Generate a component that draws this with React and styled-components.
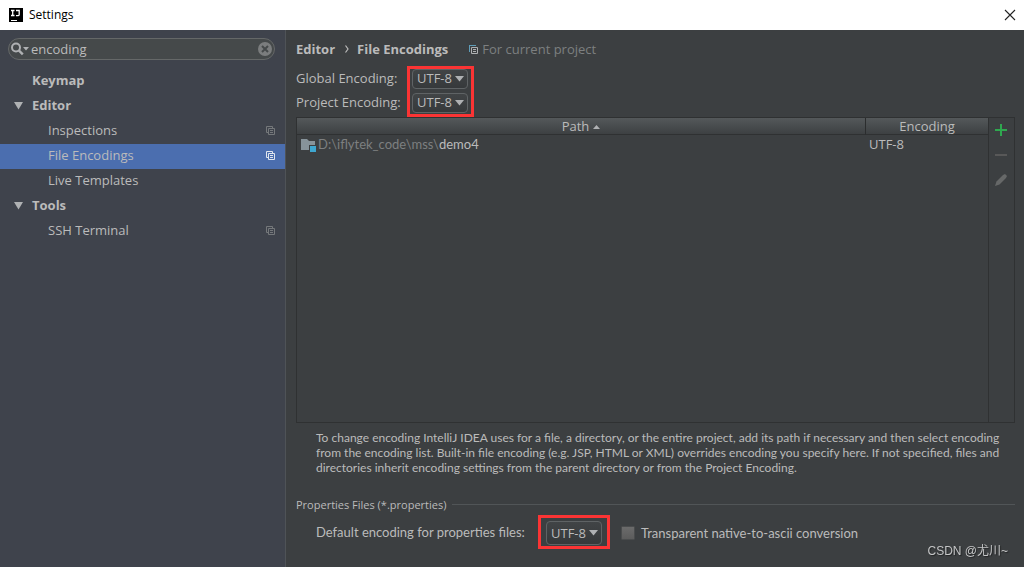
import React from 'react'
import styled, { createGlobalStyle, css } from 'styled-components'

const GlobalStyle = createGlobalStyle`
  * {
    box-sizing: border-box;
  }
  body {
    margin: 0;
    background: #3c3f41;
    color: #bbbbbb;
    font-family: 'Open Sans', 'Noto Sans', 'Noto Sans CJK SC', sans-serif;
    font-size: 13px;
  }
  button, input, select {
    font: inherit;
    color: inherit;
  }
`

const narrowFont = "Lato, 'Open Sans', sans-serif"

const Window = styled.div`
  display: flex;
  flex-direction: column;
  min-height: 100vh;
`

const TitleBar = styled.header`
  display: flex;
  align-items: center;
  height: 30px;
  padding: 0 8px;
  gap: 6px;
  background: #ffffff;
  color: #000000;
`

const Title = styled.h1`
  flex: 1;
  margin: 0;
  padding-bottom: 2px;
  font-size: 12px;
  font-weight: normal;
`

const IconButton = styled.button`
  display: flex;
  align-items: center;
  justify-content: center;
  padding: 0;
  border: none;
  background: none;
`

const Body = styled.div`
  display: flex;
  flex: 1;
`

const Sidebar = styled.aside`
  flex: none;
  width: 286px;
  padding-top: 8px;
  background: #3f434c;
  border-right: 1px solid #4f5357;
`

const SearchBox = styled.div`
  display: flex;
  align-items: center;
  height: 22px;
  margin: 0 10px 9px 8px;
  padding: 0 2px;
  border: 1px solid #656868;
  border-radius: 11px;
  background: #45494a;
`

const SearchInput = styled.input`
  flex: 1;
  min-width: 0;
  padding: 0 2px;
  border: none;
  outline: none;
  background: none;
`

const Tree = styled.ul`
  margin: 0;
  padding: 0;
  list-style: none;
`

const TreeLink = styled.a`
  display: flex;
  align-items: center;
  justify-content: space-between;
  height: 25px;
  padding: 0 10px 4px 48px;
  color: #bbbbbb;
  text-decoration: none;
  > svg {
    margin-top: 2px;
    color: #75787b;
  }
  ${({ $group }) =>
    $group &&
    css`
      justify-content: flex-start;
      gap: 8px;
      padding-left: 13px;
      font-weight: bold;
      > svg {
        color: #afb1b3;
      }
    `}
  ${({ $plain }) => $plain && 'padding-left: 32px;'}
  ${({ $selected }) =>
    $selected &&
    css`
      background: #4b6eaf;
      > svg {
        color: #e0e6ee;
      }
    `}
`

const Main = styled.main`
  display: flex;
  flex: 1;
  flex-direction: column;
  min-width: 0;
  padding: 9px 9px 18px 10px;
`

const Breadcrumb = styled.nav`
  display: flex;
  align-items: center;
  height: 20px;
  margin-bottom: 7px;
  font-weight: bold;
  > svg {
    margin: 0 8px 0 10px;
  }
`

const Scope = styled.span`
  display: flex;
  align-items: center;
  gap: 4px;
  margin-left: 21px;
  color: #7d7f80;
  font-weight: normal;
`

const EncodingForm = styled.div`
  display: flex;
`

const Labels = styled.div`
  display: flex;
  flex-direction: column;
  width: 111px;
`

const Label = styled.label`
  line-height: 24px;
`

const Highlight = styled.div`
  display: flex;
  flex-direction: column;
  gap: 4px;
  padding: ${({ $roomy }) => ($roomy ? '3px 5px 1px' : '0 3px 1px 2px')};
  border: 3px solid #fb3434;
`

const SelectBox = styled.span`
  display: grid;
  align-items: center;
  width: 56px;
  > * {
    grid-area: 1 / 1;
  }
  > svg {
    justify-self: end;
    margin-right: 4px;
    pointer-events: none;
  }
`

const StyledSelect = styled.select`
  appearance: none;
  width: 100%;
  height: ${({ $tall }) => ($tall ? 24 : 20)}px;
  padding: ${({ $tall }) => ($tall ? '0 4px' : '0 4px 2px')};
  border: 1px solid #5f6365;
  border-radius: 4px;
  outline: none;
  background: linear-gradient(#414446, #36393b);
  line-height: 16px;
`

const TablePanel = styled.section`
  display: flex;
  flex: 1;
  border: 1px solid #2f3132;
`

const TableArea = styled.div`
  flex: 1;
`

const Table = styled.table`
  width: 100%;
  table-layout: fixed;
  border-collapse: separate;
  border-spacing: 0;
`

const HeadCell = styled.th`
  width: ${({ $width }) => $width || 'auto'};
  height: 17px;
  padding: 0;
  border-bottom: 1px solid #2f3132;
  background: linear-gradient(#54585a, #3d4042);
  font-weight: normal;
  line-height: 16px;
  & + & {
    border-left: 1px solid #2b2d2e;
  }
  svg {
    margin-left: 4px;
  }
`

const Cell = styled.td`
  height: 18px;
  padding: 0 4px;
  line-height: 18px;
`

const PathText = styled.span`
  display: flex;
  align-items: center;
  gap: 2px;
  font-family: ${narrowFont};
  > svg {
    margin-top: 2px;
  }
`

const Dim = styled.span`
  color: #7d7f80;
`

const Toolbar = styled.div`
  display: flex;
  flex-direction: column;
  width: 26px;
  border-left: 1px solid #2f3132;
`

const ToolButton = styled(IconButton)`
  height: 25px;
  padding: 0 2px 1px 0;
`

const Hint = styled.p`
  margin: 7px 0 22px 20px;
  font-family: ${narrowFont};
  font-size: 12px;
  line-height: 15px;
`

const SectionTitle = styled.h2`
  display: flex;
  align-items: center;
  gap: 6px;
  margin: 0;
  font-size: 11px;
  font-weight: normal;
  line-height: 15px;
  &::after {
    content: '';
    flex: 1;
    height: 1px;
    background: #515557;
  }
`

const PropertiesRow = styled.div`
  display: flex;
  align-items: center;
  margin-top: 3px;
  padding-left: 20px;
`

const PropertiesLabel = styled.label`
  width: 222px;
  font-family: ${narrowFont};
`

const CheckLabel = styled.label`
  display: flex;
  align-items: center;
  gap: 6px;
  margin-left: 11px;
  padding-top: 2px;
  font-family: ${narrowFont};
`

const Checkbox = styled.input`
  appearance: none;
  width: 14px;
  height: 14px;
  margin: 0;
  border: 1px solid #4a4c4d;
  border-radius: 1px;
  background: linear-gradient(#6b6b6b, #5c5c5c);
`

const Watermark = styled.small`
  position: fixed;
  right: 16px;
  bottom: 7px;
  color: #c4c5c6;
  font-family: 'Liberation Sans', 'Noto Sans CJK SC', sans-serif;
  font-size: 12px;
  line-height: 18px;
  text-shadow: 1px 1px 1px #222425;
`

const LogoIcon = () => (
  <svg width="15" height="15" viewBox="0 0 15 15">
    <path d="M1 0h14v14H1z" fill="#000" />
    <path
      d="M3 2.500h3.500M4.700 2.500v5M3 7.500h3.500M8 2.500h3.200v4q0 1.200-1.300 1.200H8"
      fill="none"
      stroke="#fff"
      strokeWidth="1.3"
    />
    <path d="M3 12h6v1H3z" fill="#fff" />
  </svg>
)

const CloseIcon = () => (
  <svg width="12" height="12" viewBox="0 0 12 12" stroke="#222" strokeWidth="1.1">
    <path d="M1 1l10 10M11 1L1 11" />
  </svg>
)

const SearchIcon = () => (
  <svg width="18" height="14" viewBox="0 0 18 14">
    <circle cx="5" cy="5.5" r="4" fill="none" stroke="#afb1b3" strokeWidth="2" />
    <path d="M7.800 8.300l4 4" stroke="#afb1b3" strokeWidth="2.4" />
    <path d="M12 5h6l-3 3.500z" fill="#afb1b3" />
  </svg>
)

const ClearIcon = () => (
  <svg width="14" height="14" viewBox="0 0 14 14">
    <circle cx="7" cy="7" r="7" fill="#7b7d7e" />
    <path d="M4 4l6 6M10 4l-6 6" stroke="#45494a" strokeWidth="2" />
  </svg>
)

const ExpandedIcon = () => (
  <svg width="11" height="9" viewBox="0 0 11 9">
    <path d="M1 1h9L5.500 8.500z" fill="currentColor" />
  </svg>
)

const CopyIcon = () => (
  <svg width="9" height="9" viewBox="0 0 9 9" fill="none" stroke="currentColor">
    <path d="M2 6.500H.500v-6h6V2M2.500 2.500h6v6h-6zM4 4.500h3M4 6.500h3" />
  </svg>
)

const ScopeIcon = () => (
  <svg width="9" height="9" viewBox="0 0 9 9">
    <path d="M0 0h7v1H1v6H0z" fill="#5f9db8" />
    <path d="M2.500 2.500h6v6h-6zM4 4.500h3M4 6.500h3" fill="none" stroke="#afb1b3" />
  </svg>
)

const ChevronIcon = () => (
  <svg width="4" height="8" viewBox="0 0 4 8">
    <path d="M.5 .5L3 4 .5 7.500" fill="none" stroke="#bbb" strokeWidth="1.2" />
  </svg>
)

const ArrowIcon = () => (
  <svg width="9" height="6" viewBox="0 0 9 6">
    <path d="M0 0h9L4.500 5.500z" fill="#afb1b3" />
  </svg>
)

const SortIcon = () => (
  <svg width="7" height="6" viewBox="0 0 7 6">
    <path d="M0 4h7L3.500 0z" fill="#afb1b3" />
  </svg>
)

const FolderIcon = () => (
  <svg width="15" height="14" viewBox="0 0 15 14">
    <path d="M0 1h6l2 2h6v9H0z" fill="#87939a" />
    <path d="M8 7h7v7H8z" fill="#3c3f41" />
    <path d="M9 8h6v6H9z" fill="#3fa7d0" />
  </svg>
)

const PlusIcon = () => (
  <svg width="12" height="12" viewBox="0 0 12 12">
    <path d="M5 0h2v5h5v2H7v5H5V7H0V5h5z" fill="#2fa84f" />
  </svg>
)

const MinusIcon = () => (
  <svg width="12" height="2" viewBox="0 0 12 2">
    <path d="M0 0h12v2H0z" fill="#585858" />
  </svg>
)

const PencilIcon = () => (
  <svg width="12" height="12" viewBox="0 0 12 12">
    <path d="M0 12l1.500-4.500L8 1l2-1 2 2-1 2-6.500 6.500z" fill="#666868" />
  </svg>
)

const EncodingSelect = ({ id, tall }) => (
  <SelectBox>
    <StyledSelect id={id} $tall={tall} defaultValue="UTF-8">
      <option>UTF-8</option>
    </StyledSelect>
    <ArrowIcon />
  </SelectBox>
)

const treeItems = [
  { name: 'Keymap', group: true, plain: true },
  { name: 'Editor', group: true },
  { name: 'Inspections', project: true },
  { name: 'File Encodings', project: true, selected: true },
  { name: 'Live Templates' },
  { name: 'Tools', group: true },
  { name: 'SSH Terminal', project: true },
]

const App = () => (
  <Window>
    <GlobalStyle />
    <TitleBar>
      <LogoIcon />
      <Title>Settings</Title>
      <IconButton type="button" aria-label="Close">
        <CloseIcon />
      </IconButton>
    </TitleBar>
    <Body>
      <Sidebar>
        <SearchBox>
          <SearchIcon />
          <SearchInput type="text" aria-label="Search settings" defaultValue="encoding" />
          <IconButton type="button" aria-label="Clear search">
            <ClearIcon />
          </IconButton>
        </SearchBox>
        <Tree>
          {treeItems.map(({ name, group, plain, project, selected }) => (
            <li key={name}>
              <TreeLink href="#" $group={group} $plain={plain} $selected={selected}>
                {group && !plain && <ExpandedIcon />}
                {name}
                {project && <CopyIcon />}
              </TreeLink>
            </li>
          ))}
        </Tree>
      </Sidebar>
      <Main>
        <Breadcrumb>
          Editor
          <ChevronIcon />
          File Encodings
          <Scope>
            <ScopeIcon />
            For current project
          </Scope>
        </Breadcrumb>
        <EncodingForm>
          <Labels>
            <Label htmlFor="global-encoding">Global Encoding:</Label>
            <Label htmlFor="project-encoding">Project Encoding:</Label>
          </Labels>
          <Highlight>
            <EncodingSelect id="global-encoding" />
            <EncodingSelect id="project-encoding" />
          </Highlight>
        </EncodingForm>
        <TablePanel>
          <TableArea>
            <Table>
              <thead>
                <tr>
                  <HeadCell>
                    Path
                    <SortIcon />
                  </HeadCell>
                  <HeadCell $width="123px">Encoding</HeadCell>
                </tr>
              </thead>
              <tbody>
                <tr>
                  <Cell>
                    <PathText>
                      <FolderIcon />
                      <span>
                        <Dim>D:\iflytek_code\mss\</Dim>demo4
                      </span>
                    </PathText>
                  </Cell>
                  <Cell>UTF-8</Cell>
                </tr>
              </tbody>
            </Table>
          </TableArea>
          <Toolbar>
            <ToolButton type="button" aria-label="Add">
              <PlusIcon />
            </ToolButton>
            <ToolButton type="button" aria-label="Remove" disabled>
              <MinusIcon />
            </ToolButton>
            <ToolButton type="button" aria-label="Edit" disabled>
              <PencilIcon />
            </ToolButton>
          </Toolbar>
        </TablePanel>
        <Hint>
          To change encoding IntelliJ IDEA uses for a file, a directory, or the entire
          project, add its path if necessary and then select encoding from the encoding
          list. Built-in file encoding (e.g. JSP, HTML or XML) overrides encoding you
          specify here. If not specified, files and directories inherit encoding settings
          from the parent directory or from the Project Encoding.
        </Hint>
        <SectionTitle>Properties Files (*.properties)</SectionTitle>
        <PropertiesRow>
          <PropertiesLabel htmlFor="properties-encoding">
            Default encoding for properties files:
          </PropertiesLabel>
          <Highlight $roomy>
            <EncodingSelect id="properties-encoding" tall />
          </Highlight>
          <CheckLabel>
            <Checkbox type="checkbox" />
            Transparent native-to-ascii conversion
          </CheckLabel>
        </PropertiesRow>
      </Main>
    </Body>
    <Watermark>CSDN @尤川~</Watermark>
  </Window>
)

export default App
